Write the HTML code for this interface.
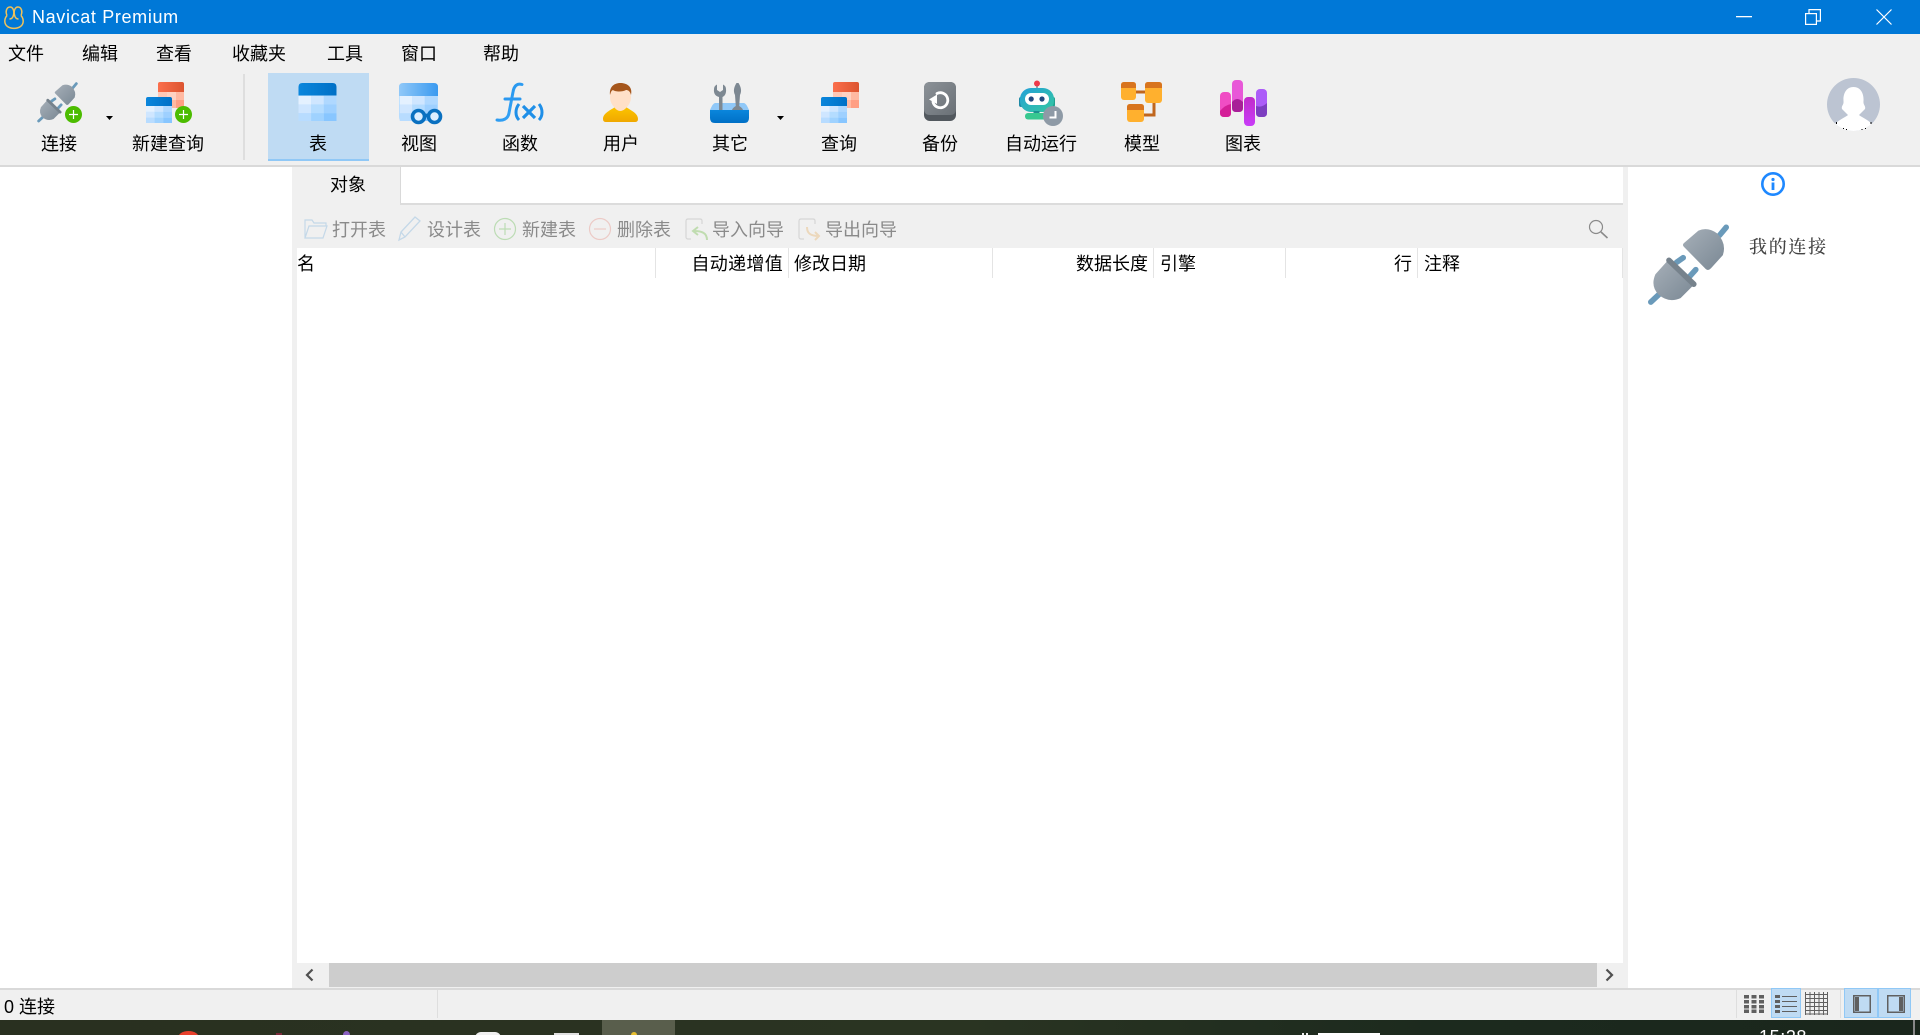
<!DOCTYPE html>
<html lang="zh"><head><meta charset="utf-8"><title>Navicat Premium</title>
<style>
*{box-sizing:border-box}
html,body{margin:0;padding:0;width:1920px;height:1035px;overflow:hidden;background:#f0f0f0}
body{position:relative;font-family:"Liberation Sans","Noto Sans CJK SC",sans-serif;font-size:18px;color:#000}
.a{position:absolute}
.t{position:absolute;line-height:22px;white-space:nowrap;height:22px}
.c{transform:translateX(-50%)}
.g{color:#8a8a8a}
.r{transform:translateX(-100%)}
svg{position:absolute;overflow:visible}
.v{position:absolute;top:248px;height:30px;width:1px;background:#e4e4e4}
</style></head><body>
<svg width="0" height="0" style="position:absolute"><defs>
<linearGradient id="pg" x1="0" y1="0" x2="1" y2="1"><stop offset="0" stop-color="#a6afb8"/><stop offset="1" stop-color="#7a8894"/></linearGradient>
<linearGradient id="hb" x1="0" y1="0" x2="1" y2="0"><stop offset="0" stop-color="#0a86dc"/><stop offset="1" stop-color="#0070c6"/></linearGradient>
<linearGradient id="hv" x1="0" y1="0" x2="1" y2="0"><stop offset="0" stop-color="#90c8f8"/><stop offset="1" stop-color="#3a9af0"/></linearGradient>
<linearGradient id="hr" x1="0" y1="0" x2="1" y2="0"><stop offset="0" stop-color="#fb6f4c"/><stop offset="1" stop-color="#dc5430"/></linearGradient>
<linearGradient id="fb" x1="0" y1="0" x2="1" y2="1"><stop offset="0" stop-color="#1f8fe8"/><stop offset="1" stop-color="#3aa8fa"/></linearGradient>
<linearGradient id="rb" x1="0" y1="0" x2="1" y2="1"><stop offset="0" stop-color="#22a0d8"/><stop offset="1" stop-color="#36c8a0"/></linearGradient>
<linearGradient id="tb" x1="0" y1="0" x2="0" y2="1"><stop offset="0" stop-color="#0a86dc"/><stop offset="1" stop-color="#0070c6"/></linearGradient>
<linearGradient id="uy" x1="0" y1="0" x2="0" y2="1"><stop offset="0" stop-color="#fcc400"/><stop offset="1" stop-color="#f0a800"/></linearGradient>
<linearGradient id="bk" x1="0" y1="0" x2="1" y2="1"><stop offset="0" stop-color="#8c9298"/><stop offset="1" stop-color="#6a7076"/></linearGradient>
<linearGradient id="c3" x1="0" y1="0" x2="0" y2="1"><stop offset="0" stop-color="#c02cc8"/><stop offset="1" stop-color="#c83cf8"/></linearGradient>
<symbol id="plug" viewBox="82 188 248 248">
<path d="M300 222L320 198M92 424L122 396M170 304L190 290M210 346L228 326" stroke="#6a9aba" stroke-width="17" stroke-linecap="round" fill="none"/>
<path d="M192 246L236 208Q264 196 292 216Q322 246 310 282L274 322Q266 331 258 324L193 258Q186 252 192 246Z" fill="url(#pg)"/>
<path d="M142 300L106 340Q90 376 116 402Q146 428 182 412L222 372Z" fill="url(#pg)"/>
<path d="M147 298L222 370" stroke="#76828c" stroke-width="17" stroke-linecap="round"/>
</symbol>
<symbol id="cells" viewBox="0 0 39 26">
<rect width="13" height="9" fill="#e4f1ff"/><rect x="13" width="13" height="9" fill="#cfe6ff"/><rect x="26" width="13" height="9" fill="#afd8ff"/>
<rect y="9" width="13" height="9" fill="#cfe6ff"/><rect x="13" y="9" width="13" height="9" fill="#b4dcff"/><rect x="26" y="9" width="13" height="9" fill="#9ed0ff"/>
<rect y="18" width="13" height="8" fill="#b8dcff"/><rect x="13" y="18" width="13" height="8" fill="#9fd2ff"/><rect x="26" y="18" width="13" height="8" fill="#88c6ff"/>
</symbol>
<symbol id="tbl" viewBox="0 0 39 39">
<path d="M4 0H35Q39 0 39 4V13H0V4Q0 0 4 0Z" fill="url(#hb)"/>
<path d="M0 13H39V35Q39 39 35 39H4Q0 39 0 35Z" fill="#b4dcff"/>
<svg x="0" y="13" width="39" height="26"><use href="#cells"/></svg>
</symbol>
<symbol id="qry" viewBox="0 0 38 41">
<path d="M14 0H36Q38 0 38 2V10H12V2Q12 0 14 0Z" fill="url(#hr)"/>
<path d="M12 10H38V24Q38 26 36 26H12Z" fill="#ffb9a2"/>
<rect x="21" y="10" width="9" height="8" fill="#ffd2c2"/><rect x="30" y="18" width="8" height="8" fill="#ff9f84"/><rect x="12" y="10" width="9" height="8" fill="#ffc8b6"/>
<path d="M2 15H24Q26 15 26 17V24H0V17Q0 15 2 15Z" fill="url(#hb)"/>
<path d="M0 24H26V39Q26 41 24 41H2Q0 41 0 39Z" fill="#b4dcff"/>
<svg x="0" y="24" width="26" height="17" preserveAspectRatio="none" viewBox="0 0 39 26"><use href="#cells" width="39" height="26"/></svg>
</symbol>
</defs></svg>

<!-- title bar -->
<div class="a" style="left:0;top:0;width:1920px;height:34px;background:#0078d7"></div>
<svg style="left:3px;top:6px" width="22" height="23" viewBox="0 0 22 23" fill="none" stroke="#f0c25a" stroke-width="1.500"><path d="M4 9.500C1 13 1 18 4.500 20.500C8 23 14 23 17.500 20.500C21 18 21 13 18 9.500"/><path d="M4 9.500C2 5 4 1 7 1C10 1 11.500 5 10.500 9C10 11.500 8.500 13 6.500 13"/><path d="M18 9.500C20 5 18 1 15 1C12 1 10.500 5 11.500 9C12 11.500 13.500 13 15.500 13"/></svg>
<div class="t" style="left:32px;top:6px;color:#fff;font-size:18px;letter-spacing:.65px">Navicat Premium</div>
<svg style="left:1736px;top:16px" width="16" height="2"><rect width="16" height="1.300" fill="#fff"/></svg>
<svg style="left:1805px;top:9px" width="16" height="16" fill="none" stroke="#fff" stroke-width="1.200"><rect x=".6" y="4.600" width="10.800" height="10.800"/><path d="M4 4.500V.6H15.400V12H11.500"/></svg>
<svg style="left:1876px;top:9px" width="16" height="16" fill="none" stroke="#fff" stroke-width="1.200"><path d="M.5 .5L15.500 15.500M15.500 .5L.5 15.500"/></svg>

<!-- menu -->
<div class="t" style="left:8px;top:43px">文件</div>
<div class="t" style="left:82px;top:43px">编辑</div>
<div class="t" style="left:156px;top:43px">查看</div>
<div class="t" style="left:232px;top:43px">收藏夹</div>
<div class="t" style="left:327px;top:43px">工具</div>
<div class="t" style="left:401px;top:43px">窗口</div>
<div class="t" style="left:483px;top:43px">帮助</div>

<!-- toolbar -->
<div class="a" style="left:243px;top:74px;width:2px;height:86px;background:#dedede"></div>
<div class="a" style="left:268px;top:73px;width:101px;height:88px;background:#bfdbf3;border-bottom:2px solid #90c8f6"></div>
<div class="a" style="left:0;top:165px;width:1920px;height:2px;background:#d9d9d9"></div>

<svg style="left:37px;top:82px" width="41" height="41"><use href="#plug"/></svg>
<svg style="left:65px;top:106px" width="17" height="17" viewBox="0 0 17 17"><circle cx="8.500" cy="8.500" r="8.500" fill="#4cbc00"/><path d="M8.500 4V13M4 8.500H13" stroke="#fff" stroke-width="1.200"/></svg>
<svg style="left:106px;top:116px" width="7" height="4"><path d="M0 0H7L3.500 4Z" fill="#000"/></svg>
<div class="t c" style="left:59px;top:133px">连接</div>

<svg style="left:146px;top:82px" width="38" height="41"><use href="#qry"/></svg>
<svg style="left:175px;top:106px" width="17" height="17" viewBox="0 0 17 17"><circle cx="8.500" cy="8.500" r="8.500" fill="#4cbc00"/><path d="M8.500 4V13M4 8.500H13" stroke="#fff" stroke-width="1.200"/></svg>
<div class="t c" style="left:168px;top:133px">新建查询</div>

<svg style="left:298px;top:83px" width="39" height="38"><use href="#tbl"/></svg>
<div class="t c" style="left:318px;top:133px">表</div>

<svg style="left:399px;top:83px" width="39" height="38" viewBox="0 0 39 38">
<path d="M4 0H35Q39 0 39 4V13H0V4Q0 0 4 0Z" fill="url(#hv)"/><path d="M0 13H39V34Q39 38 35 38H4Q0 38 0 34Z" fill="#b4dcff"/>
<svg x="0" y="13" width="39" height="25"><use href="#cells"/></svg></svg>
<svg style="left:409px;top:108px" width="34" height="17" viewBox="0 0 34 17" fill="#dceeff" stroke="#0a70c0" stroke-width="3.600"><circle cx="9.500" cy="8.500" r="6"/><circle cx="25.500" cy="8.500" r="6"/><path d="M15 7.500H20"/></svg>
<div class="t c" style="left:419px;top:133px">视图</div>

<svg style="left:496px;top:83px" width="48" height="39" viewBox="0 0 48 39" fill="none" stroke="url(#fb)" stroke-width="3"><path d="M26 1.500C21 0 18 3 17 9L13 30C12 36 7 38 1 37" stroke-linecap="round"/><path d="M9 16H24" stroke="#2a98f0" stroke-linecap="round"/><path d="M23 21C19 26 19 33 23 37M43 21C47 26 47 33 43 37" stroke="#1f8fe8"/><path d="M27 23L39 35M39 23L27 35" stroke="#1f8fe8" stroke-width="3.200"/></svg>
<div class="t c" style="left:520px;top:133px">函数</div>

<svg style="left:603px;top:83px" width="35" height="39" viewBox="0 0 35 39">
<path d="M0 36C0 30 8 27 12 24H23C27 27 35 30 35 36Q35 39 32 39H3Q0 39 0 36Z" fill="url(#uy)"/>
<path d="M11 24Q17 32 24 24L22 20H13Z" fill="#ffe0c8"/>
<ellipse cx="17.500" cy="14" rx="10.500" ry="12.500" fill="#ffe0c8"/>
<path d="M7 12C6 3 12 0 17.500 0C23 0 30 3 28 12C27 8 25 7 23 7C20 9 12 9 10 7C8 8 8 9 7 12Z" fill="#a5561c"/></svg>
<div class="t c" style="left:621px;top:133px">用户</div>

<svg style="left:710px;top:82px" width="39" height="41" viewBox="0 0 39 41">
<path d="M5 21H34Q36 21 39 28H0Q3 21 5 21Z" fill="#90c8f8"/>
<path d="M0 28H39V36Q39 41 34 41H5Q0 41 0 36Z" fill="url(#tb)"/>
<path d="M9 30V15C5 14 3.500 11 4 7C4 5 5 3.500 7 2.500V8L10 10L13 8V2.500C15 3.500 16 5 16 7C16.500 11 15 14 12.500 15V28H9Z" fill="#7d8892"/>
<path d="M26.500 1C24 5 23 9 25 13L25.800 24Q22.500 26 22 28H33Q32.500 26 29.200 24L30 13C32 9 31 5 28.500 1Z" fill="#7d8892"/>
</svg>
<svg style="left:777px;top:116px" width="7" height="4"><path d="M0 0H7L3.500 4Z" fill="#000"/></svg>
<div class="t c" style="left:730px;top:133px">其它</div>

<svg style="left:821px;top:82px" width="38" height="41"><use href="#qry"/></svg>
<div class="t c" style="left:839px;top:133px">查询</div>

<svg style="left:924px;top:82px" width="32" height="39" viewBox="0 0 32 39">
<rect width="32" height="39" rx="6" fill="#52585e"/><path d="M6 0H26Q32 0 32 6V27Q32 33 26 33H6Q0 33 0 27V6Q0 0 6 0Z" fill="url(#bk)"/>
<path d="M13 11.500A7.500 7.500 0 1 1 9 20" fill="none" stroke="#fff" stroke-width="2.800" stroke-linecap="round"/>
<path d="M5 17.500L13 12.500V22Z" fill="#fff"/></svg>
<div class="t c" style="left:940px;top:133px">备份</div>

<svg style="left:1019px;top:80px" width="45" height="46" viewBox="0 0 45 46">
<path d="M18 5V10" stroke="#6a8a9a" stroke-width="1.500"/><circle cx="18" cy="3.500" r="3" fill="#ee3a4a"/>
<rect x="0" y="17" width="4" height="10" rx="2" fill="#1e8aa6"/><rect x="32" y="17" width="4" height="10" rx="2" fill="#22a090"/>
<rect x="1" y="8" width="34" height="24" rx="11" fill="url(#rb)"/>
<rect x="6" y="13" width="24" height="12" rx="6" fill="#fff"/>
<circle cx="12.200" cy="19" r="2.600" fill="#224a80"/><circle cx="23" cy="19" r="2.600" fill="#224a80"/>
<rect x="14.500" y="31" width="6" height="3" fill="#1e9090"/>
<rect x="6" y="33" width="22" height="6.500" rx="3" fill="#38c890"/>
<circle cx="34" cy="36" r="10" fill="#8e9aa6"/><path d="M36.500 31V37.500H30.500" fill="none" stroke="#fff" stroke-width="2"/></svg>
<div class="t c" style="left:1041px;top:133px">自动运行</div>

<svg style="left:1121px;top:82px" width="41" height="40" viewBox="0 0 41 40">
<path d="M15 10H25M33 18V33H23" fill="none" stroke="#c0661e" stroke-width="3"/>
<rect x="0" y="0" width="15" height="18" rx="3" fill="#ffb02e"/><path d="M3 0H12Q15 0 15 3V6H0V3Q0 0 3 0Z" fill="#d8741e"/>
<rect x="24" y="0" width="17" height="21" rx="3" fill="#ffb02e"/><path d="M27 0H38Q41 0 41 3V6H24V3Q24 0 27 0Z" fill="#d8741e"/>
<rect x="6" y="22" width="17" height="18" rx="3" fill="#ffb02e"/><path d="M9 22H20Q23 22 23 25V28H6V25Q6 22 9 22Z" fill="#d8741e"/></svg>
<div class="t c" style="left:1142px;top:133px">模型</div>

<svg style="left:1220px;top:80px" width="48" height="46" viewBox="0 0 48 46">
<rect x="0" y="12" width="11" height="25" rx="4" fill="#f04dc4"/><path d="M0 31Q5 25 11 24V33Q11 37 7 37H4Q0 37 0 33Z" fill="#d41f98"/>
<rect x="12" y="0" width="11" height="32" rx="4" fill="#e858d8"/><path d="M12 22Q17 16 23 22V28Q23 32 19 32H16Q12 32 12 28Z" fill="#a82098"/>
<rect x="24" y="17" width="11" height="29" rx="4" fill="url(#c3)"/>
<rect x="36" y="9" width="11" height="28" rx="4" fill="#ac5cf8"/><path d="M36 26Q42 28 47 23V33Q47 37 43 37H40Q36 37 36 33Z" fill="#7c3ec0"/></svg>
<div class="t c" style="left:1243px;top:133px">图表</div>

<!-- avatar -->
<svg style="left:1827px;top:78px" width="53" height="53" viewBox="0 0 53 53">
<defs><clipPath id="av"><circle cx="26.500" cy="26.500" r="26.500"/></clipPath></defs>
<circle cx="26.500" cy="26.500" r="26.500" fill="#bcc4d2"/>
<path clip-path="url(#av)" d="M26.500 9C19 9 16 16 16.500 23C17 27 14 28 15 31L21 37C19 39 13 41 8 46V53H45V46C40 41 34 39 32 37L38 31C39 28 36 27 36.500 23C37 16 34 9 26.500 9Z" fill="#fff"/>
<path d="M9 44h1v2h-1zM43.500 44h1v2h-1zM16 50h1v1h-1zM19 51h1v1h-1zM34.500 51h1v1h-1zM38 50h1v1h-1z" fill="#000"/></svg>

<!-- content panels -->
<div class="a" style="left:0;top:167px;width:292px;height:821px;background:#fff"></div>
<div class="a" style="left:400px;top:167px;width:1223px;height:36px;background:#fff;border-left:1px solid #d9d9d9"></div>
<div class="a" style="left:400px;top:203px;width:1223px;height:2px;background:#dcdcdc"></div>
<div class="t c" style="left:348px;top:174px">对象</div>

<!-- object toolbar -->
<svg style="left:304px;top:218px" width="24" height="22" viewBox="0 0 24 22" fill="none" stroke="#c4d8e8" stroke-width="1.200"><path d="M1 20V2H8L10 5H22V8M1 20L5 8H23L19 20Z"/></svg>
<div class="t g" style="left:332px;top:219px">打开表</div>
<svg style="left:398px;top:216px" width="24" height="25" viewBox="0 0 24 25" fill="none" stroke="#c4d8e8" stroke-width="1.300"><path d="M1 24L3 16L17 1L22 5L7 21Z M3 16L7 21"/></svg>
<div class="t g" style="left:427px;top:219px">设计表</div>
<svg style="left:494px;top:218px" width="22" height="22" fill="none" stroke="#bcdcb4" stroke-width="1.200"><circle cx="11" cy="11" r="10.500"/><path d="M11 5V17M5 11H17"/></svg>
<div class="t g" style="left:522px;top:219px">新建表</div>
<svg style="left:589px;top:218px" width="22" height="22" fill="none" stroke="#eccac6" stroke-width="1.200"><circle cx="11" cy="11" r="10.500"/><path d="M5 11H17"/></svg>
<div class="t g" style="left:617px;top:219px">删除表</div>
<svg style="left:685px;top:218px" width="24" height="23" viewBox="0 0 24 23" fill="none" stroke="#d6d6d6" stroke-width="1.200"><path d="M6 21H3Q1 21 1 19V3Q1 1 3 1H15Q17 1 17 3V6"/><path d="M22 22C22 15 17 13 9 13M13 9L8 13L13 17" stroke="#c0dcb0" stroke-width="2"/></svg>
<div class="t g" style="left:712px;top:219px">导入向导</div>
<svg style="left:798px;top:218px" width="24" height="23" viewBox="0 0 24 23" fill="none" stroke="#d6d6d6" stroke-width="1.200"><path d="M6 21H3Q1 21 1 19V3Q1 1 3 1H15Q17 1 17 3V6"/><path d="M9 9C9 15 12 18 21 18M17 14L21 18L17 22" stroke="#ecd8bc" stroke-width="2"/></svg>
<div class="t g" style="left:825px;top:219px">导出向导</div>
<svg style="left:1589px;top:220px" width="20" height="19" fill="none" stroke="#8a8a8a" stroke-width="1.200"><circle cx="7" cy="7" r="6.500"/><path d="M12 12L18.500 18" stroke-width="1.600"/></svg>

<!-- table -->
<div class="a" style="left:297px;top:248px;width:1326px;height:715px;background:#fff"></div>
<div class="v" style="left:655px"></div><div class="v" style="left:788px"></div><div class="v" style="left:992px"></div><div class="v" style="left:1153px"></div><div class="v" style="left:1285px"></div><div class="v" style="left:1417px"></div><div class="v" style="left:1622px"></div>
<div class="t" style="left:297px;top:253px">名</div>
<div class="t r" style="left:783px;top:253px;letter-spacing:.3px">自动递增值</div>
<div class="t" style="left:794px;top:253px">修改日期</div>
<div class="t r" style="left:1148px;top:253px">数据长度</div>
<div class="t" style="left:1160px;top:253px">引擎</div>
<div class="t r" style="left:1412px;top:253px">行</div>
<div class="t" style="left:1424px;top:253px">注释</div>

<!-- scrollbar -->
<div class="a" style="left:329px;top:963px;width:1268px;height:24px;background:#cdcdcd"></div>
<svg style="left:305px;top:969px" width="9" height="12" fill="none" stroke="#505050" stroke-width="2.200"><path d="M7.500 .5L2 6L7.500 11.500"/></svg>
<svg style="left:1605px;top:969px" width="9" height="12" fill="none" stroke="#505050" stroke-width="2.200"><path d="M1.500 .5L7 6L1.500 11.500"/></svg>

<!-- right panel -->
<div class="a" style="left:1628px;top:167px;width:292px;height:821px;background:#fff"></div>
<svg style="left:1761px;top:172px" width="24" height="24" viewBox="0 0 24 24"><circle cx="12" cy="12" r="10.700" fill="none" stroke="#1e88ff" stroke-width="2.600"/><circle cx="12" cy="7.500" r="1.600" fill="#1e88ff"/><rect x="10.600" y="10.500" width="2.800" height="7.500" fill="#1e88ff"/></svg>
<svg style="left:1647px;top:224px" width="83" height="82"><use href="#plug"/></svg>
<div class="t" style="left:1749px;top:235px;font-family:'Noto Serif CJK SC','Liberation Serif',serif;font-weight:500;color:#444;letter-spacing:1.700px">我的连接</div>

<!-- status bar -->
<div class="a" style="left:0;top:988px;width:1920px;height:2px;background:#d9d9d9"></div>
<div class="t" style="left:4px;top:996px">0 连接</div>
<div class="a" style="left:437px;top:990px;width:1px;height:28px;background:#dedede"></div>
<div class="a" style="left:1736px;top:990px;width:1px;height:28px;background:#dedede"></div>
<div class="a" style="left:1840px;top:990px;width:1px;height:28px;background:#dedede"></div>
<svg style="left:1744px;top:995px" width="20" height="18" fill="#606060">
<rect width="5" height="3.500"/><rect x="7.500" width="5" height="3.500"/><rect x="15" width="5" height="3.500"/>
<rect y="5" width="5" height="3.500"/><rect x="7.500" y="5" width="5" height="3.500"/><rect x="15" y="5" width="5" height="3.500"/>
<rect y="10" width="5" height="3.500"/><rect x="7.500" y="10" width="5" height="3.500"/><rect x="15" y="10" width="5" height="3.500"/>
<rect y="14.500" width="5" height="3.500"/><rect x="7.500" y="14.500" width="5" height="3.500"/><rect x="15" y="14.500" width="5" height="3.500"/></svg>
<div class="a" style="left:1771px;top:988px;width:30px;height:30px;background:#bfdbf3;border:1px solid #90c8f6"></div>
<svg style="left:1775px;top:995px" width="22" height="18" fill="#606060">
<rect width="5" height="3"/><rect y="5" width="5" height="3"/><rect y="10" width="5" height="3"/><rect y="15" width="5" height="3"/>
<rect x="7" y="1" width="15" height="1"/><rect x="7" y="6" width="15" height="1"/><rect x="7" y="11" width="15" height="1"/><rect x="7" y="16" width="15" height="1"/></svg>
<svg style="left:1805px;top:992px" width="23" height="23" fill="none" stroke="#606060" stroke-width="1"><path d="M.5 0V23M5 0V23M9.500 0V23M14 0V23M18.500 0V23M22.500 0V23M0 2.500H23M0 6.500H23M0 10.500H23M0 14.500H23M0 18.500H23M0 22H23"/></svg>
<div class="a" style="left:1844px;top:988px;width:34px;height:30px;background:#bfdbf3;border:1px solid #90c8f6"></div>
<div class="a" style="left:1878px;top:988px;width:33px;height:30px;background:#bfdbf3;border:1px solid #90c8f6"></div>
<svg style="left:1853px;top:995px" width="18" height="18"><rect x=".75" y=".75" width="16.500" height="16.500" fill="none" stroke="#606060" stroke-width="1.500"/><rect x="2" y="2" width="4" height="14" fill="#606060"/></svg>
<svg style="left:1887px;top:995px" width="18" height="18"><rect x=".75" y=".75" width="16.500" height="16.500" fill="none" stroke="#606060" stroke-width="1.500"/><rect x="12" y="2" width="4" height="14" fill="#606060"/></svg>

<!-- taskbar -->
<div class="a" style="left:0;top:1020px;width:1920px;height:15px;background:linear-gradient(90deg,#293020 0%,#2a3422 50%,#1c2a1e 75%,#1a261c 100%);overflow:hidden">
<div class="a" style="left:602px;top:0;width:73px;height:15px;background:#595e4c"></div>
<div class="a" style="left:178px;top:11px;width:21px;height:14px;border-radius:50%;background:#e8402c"></div>
<div class="a" style="left:276px;top:13px;width:6px;height:6px;background:#7a2a3a"></div>
<div class="a" style="left:343px;top:11px;width:7px;height:8px;border-radius:50%;background:#8a60c0"></div>
<div class="a" style="left:475px;top:12px;width:26px;height:6px;border-radius:6px 6px 0 0;background:#f0f0f0"></div>
<div class="a" style="left:554px;top:13px;width:25px;height:4px;background:#e0e0e0"></div>
<div class="a" style="left:631px;top:12px;width:6px;height:6px;border-radius:50%;background:#e8c030"></div>
<div class="a" style="left:1302px;top:13px;width:2px;height:4px;background:#f0f0f0"></div>
<div class="a" style="left:1306px;top:13px;width:2px;height:4px;background:#f0f0f0"></div>
<div class="a" style="left:1318px;top:13px;width:62px;height:4px;background:#fff"></div>
<div class="a" style="left:1913px;top:0;width:2px;height:15px;background:#888"></div>
<div class="t" style="left:1759px;top:6px;color:#fff;font-size:18px;letter-spacing:.6px">15:28</div>
</div>
</body></html>
